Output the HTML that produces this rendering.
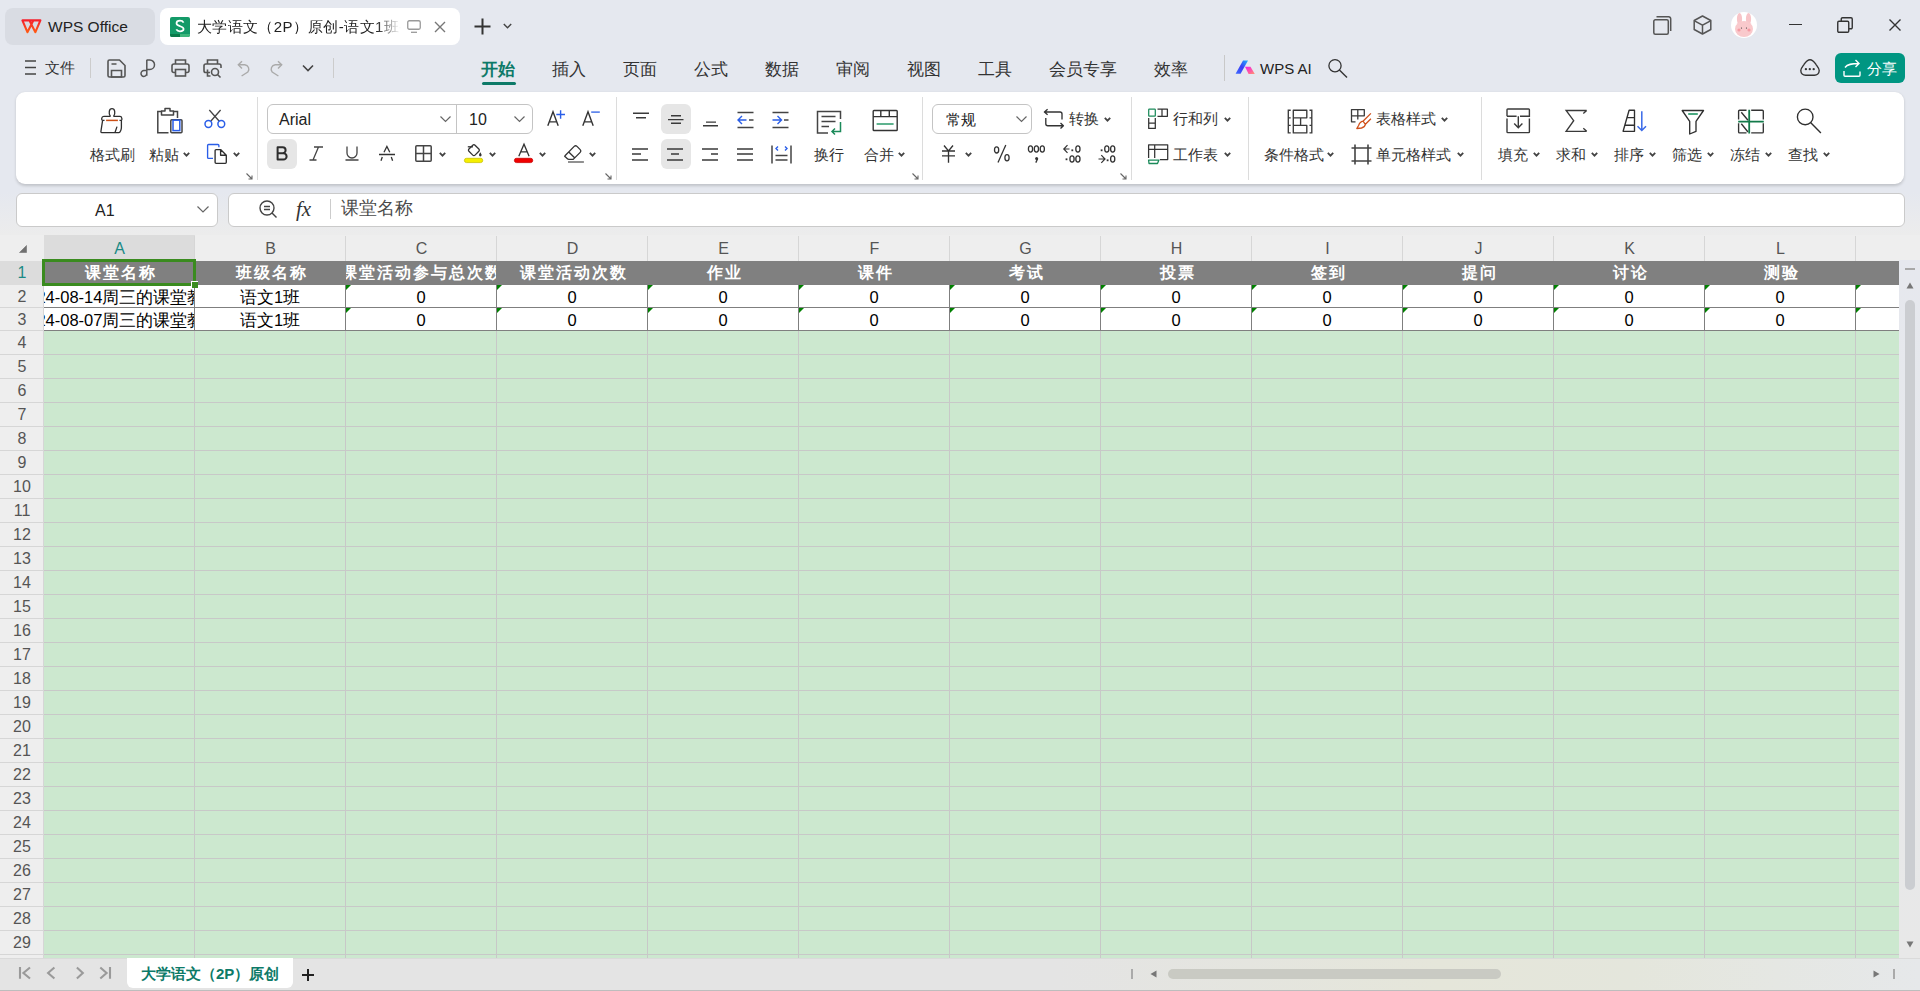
<!DOCTYPE html><html><head><meta charset="utf-8"><style>
*{box-sizing:border-box;margin:0;padding:0}
html,body{width:1920px;height:991px;overflow:hidden}
body{position:relative;font-family:"Liberation Sans",sans-serif;color:#333;background:#e5e8ef}
.a{position:absolute}
svg{position:absolute;overflow:visible}
.t{position:absolute;white-space:nowrap;line-height:1}
.sep{position:absolute;width:1px;background:#dcdcdc;top:97px;height:83px}
.box{position:absolute;border:1px solid #c4c4c4;border-radius:6px;background:#fff}
.bbg{position:absolute;background:#e6e6e6;border-radius:6px}
.lb{position:absolute;white-space:nowrap;line-height:1;font-size:15px;color:#333}
.mn{position:absolute;white-space:nowrap;line-height:1;font-size:17px;color:#333;top:61px}
.ch{position:absolute;width:26px;height:26px;top:236px;text-align:center;font-size:16px;line-height:26px;color:#555}
.rn{position:absolute;left:0;width:44px;text-align:center;font-size:16px;color:#555;line-height:24px}
.hd{position:absolute;top:261px;height:24px;color:#fff;font-weight:bold;font-size:16px;text-align:center;line-height:24px;overflow:hidden;white-space:nowrap;letter-spacing:2px;text-indent:2px}
.dc{position:absolute;height:23px;color:#000;font-size:16.5px;text-align:center;line-height:24.6px;overflow:hidden;white-space:nowrap}
.tri{position:absolute;width:0;height:0;border-top:5px solid #008000;border-right:5px solid transparent}
</style></head><body>
<div class="a" style="left:0;top:0;width:1920px;height:92px;background:#e5e8ef"></div>
<div class="a" style="left:0;top:92px;width:1920px;height:143px;background:linear-gradient(180deg,#e5e8ef 0px,#e5e8ef 100px,#ececec 143px)"></div>
<div class="a" style="left:5px;top:8px;width:150px;height:37px;background:#d9dce3;border-radius:8px"></div>
<svg style="left:21px;top:19px" width="21" height="15" viewBox="0 0 21 15"><defs><linearGradient id="wg" x1="0" y1="0" x2="0" y2="1"><stop offset="0" stop-color="#f5222d"/><stop offset="1" stop-color="#ff5a14"/></linearGradient></defs><path d="M1.4 1.4H19.4L14.4 13.2L10.4 5.6L6.4 13.2Z M8.4 1.4L11.2 7 M12.4 1.4L9.6 7" fill="none" stroke="url(#wg)" stroke-width="2.1" stroke-linejoin="round" stroke-linecap="round"/></svg>
<div class="t" style="left:48px;top:19px;font-size:15.5px;color:#222">WPS Office</div>
<div class="a" style="left:160px;top:8px;width:300px;height:37px;background:#fff;border-radius:8px"></div>
<svg style="left:170px;top:17px" width="20" height="20" viewBox="0 0 20 20"><defs><clipPath id="sc"><rect x="0" y="0" width="20" height="20" rx="2"/></clipPath></defs><g clip-path="url(#sc)"><rect width="20" height="20" fill="#139a68"/><rect y="17" width="10" height="3" fill="#0a7a4a"/><rect x="10" y="17" width="10" height="3" fill="#3db67c"/></g><path d="M13.6 5.6C12.8 4.2 11.5 3.7 10 3.7C7.8 3.7 6.5 4.8 6.5 6.3C6.5 8.2 8.5 8.7 10.2 9.2C12.3 9.8 13.6 10.5 13.6 12C13.6 13.5 12.2 14.3 10 14.3C8.3 14.3 7 13.6 6.3 12.4" fill="none" stroke="#fff" stroke-width="1.7"/></svg>
<div class="t" style="left:197px;top:19px;font-size:15px;color:#222;width:206px;overflow:hidden;letter-spacing:0.35px;-webkit-mask-image:linear-gradient(90deg,#000 180px,transparent 204px)">大学语文（2P）原创-语文1班-课堂</div>
<svg style="left:407px;top:20px" width="14" height="13" viewBox="0 0 14 13"><rect x="0.75" y="0.75" width="12.5" height="8.5" rx="1.5" fill="none" stroke="#999" stroke-width="1.3"/><path d="M4 12.3h6" stroke="#999" stroke-width="1.3"/></svg>
<svg style="left:434px;top:21px" width="12" height="12" viewBox="0 0 12 12"><path d="M1 1L11 11M11 1L1 11" stroke="#777" stroke-width="1.4"/></svg>
<svg style="left:474px;top:18px" width="17" height="17" viewBox="0 0 17 17"><path d="M8.5 0.5v16M0.5 8.5h16" stroke="#333" stroke-width="2"/></svg>
<svg style="left:503px;top:23px" width="9" height="6" viewBox="0 0 9 6"><path d="M0.8 1L4.5 4.8L8.2 1" fill="none" stroke="#444" stroke-width="1.4"/></svg>
<svg style="left:1653px;top:16px" width="19" height="19" viewBox="0 0 19 19"><rect x="0.8" y="3.8" width="14.5" height="14.4" rx="1.5" fill="none" stroke="#555" stroke-width="1.5"/><path d="M3.5 0.8h12.2a2 2 0 0 1 2 2v12.2" fill="none" stroke="#555" stroke-width="1.5"/></svg>
<svg style="left:1693px;top:15px" width="19" height="20" viewBox="0 0 19 20"><path d="M9.5 1L17.8 5.5V14.5L9.5 19L1.2 14.5V5.5Z" fill="none" stroke="#555" stroke-width="1.5" stroke-linejoin="round"/><path d="M1.5 5.8L9.5 10.2L17.5 5.8M9.5 10.2V18.8" fill="none" stroke="#555" stroke-width="1.5"/></svg>
<svg style="left:1731px;top:12px" width="26" height="26" viewBox="0 0 26 26"><circle cx="13" cy="13" r="13" fill="#fff"/><ellipse cx="8.5" cy="7" rx="2.6" ry="6" fill="#f7c4c8"/><ellipse cx="17.5" cy="7" rx="2.6" ry="6" fill="#f7c4c8"/><ellipse cx="13" cy="17" rx="9" ry="8" fill="#f9c9cc"/><circle cx="8" cy="18" r="1.6" fill="#f59aa3"/><circle cx="18" cy="18" r="1.6" fill="#f59aa3"/><circle cx="10.5" cy="16" r="0.6" fill="#333"/><circle cx="15.5" cy="16" r="0.6" fill="#333"/></svg>
<div class="a" style="left:1789px;top:24px;width:12.5px;height:1.2px;background:#333"></div>
<svg style="left:1837px;top:17px" width="16" height="16" viewBox="0 0 16 16"><rect x="0.75" y="4.25" width="11" height="11" rx="1.2" fill="none" stroke="#333" stroke-width="1.4"/><path d="M4.25 4V2a1.25 1.25 0 0 1 1.25-1.25h8.5A1.25 1.25 0 0 1 15.25 2v8.5a1.25 1.25 0 0 1-1.25 1.25H12" fill="none" stroke="#333" stroke-width="1.4"/></svg>
<svg style="left:1889px;top:19px" width="12" height="12" viewBox="0 0 12 12"><path d="M0.5 0.5L11.5 11.5M11.5 0.5L0.5 11.5" stroke="#333" stroke-width="1.4"/></svg>
<svg style="left:25px;top:60px" width="11" height="15" viewBox="0 0 11 15"><path d="M0 1h11M0 7.5h11M0 14h11" stroke="#444" stroke-width="1.5"/></svg>
<div class="t" style="left:45px;top:60px;font-size:15px;color:#333">文件</div>
<div class="a" style="left:90px;top:58px;width:1px;height:20px;background:#ccc"></div>
<svg style="left:107px;top:59px" width="19" height="19" viewBox="0 0 19 19"><path d="M1 2.5a1.5 1.5 0 0 1 1.5-1.5h10L18 6.5v10a1.5 1.5 0 0 1-1.5 1.5h-14A1.5 1.5 0 0 1 1 16.5Z" fill="none" stroke="#555" stroke-width="1.6" stroke-linejoin="round"/><path d="M4.5 11.5h10v6.5h-10Z M4.5 5h5" fill="none" stroke="#555" stroke-width="1.6"/></svg>
<svg style="left:140px;top:59px" width="17" height="19" viewBox="0 0 17 19"><path d="M6.8 1H9.8A4.6 4.6 0 0 1 9.8 10.4H6.8M6.8 0.8V16.8M6.8 11.6H4.2A2.9 2.9 0 1 0 6.8 14.5" fill="none" stroke="#555" stroke-width="1.5"/></svg>
<svg style="left:171px;top:59px" width="19" height="18" viewBox="0 0 19 18"><path d="M4.5 5V1h10v4" fill="none" stroke="#555" stroke-width="1.6"/><rect x="1" y="5" width="17" height="8.5" rx="2" fill="none" stroke="#555" stroke-width="1.6"/><rect x="4.5" y="10.5" width="10" height="6.5" fill="#e5e8ef" stroke="#555" stroke-width="1.6"/></svg>
<svg style="left:203px;top:59px" width="20" height="19" viewBox="0 0 20 19"><path d="M4.5 5V1h10v4" fill="none" stroke="#555" stroke-width="1.6"/><path d="M7 13.5H2.8A1.8 1.8 0 0 1 1 11.7V6.8A1.8 1.8 0 0 1 2.8 5h13.4A1.8 1.8 0 0 1 18 6.8V9" fill="none" stroke="#555" stroke-width="1.6"/><path d="M4.5 10.5v6.5h3" fill="none" stroke="#555" stroke-width="1.6"/><circle cx="12" cy="13" r="3.5" fill="none" stroke="#555" stroke-width="1.6"/><path d="M14.5 15.5L17.5 18.5" stroke="#555" stroke-width="1.6"/></svg>
<svg style="left:237px;top:60px" width="14" height="17" viewBox="0 0 14 17"><path d="M5 1.2L1.3 4.8L5 8.4" fill="none" stroke="#aaa" stroke-width="1.4"/><path d="M1.6 4.8H7.8A4.4 4.4 0 0 1 10.8 12L4.6 16" fill="none" stroke="#aaa" stroke-width="1.4"/></svg>
<svg style="left:269px;top:60px" width="14" height="17" viewBox="0 0 14 17"><path d="M9 1.2L12.7 4.8L9 8.4" fill="none" stroke="#aaa" stroke-width="1.4"/><path d="M12.4 4.8H6.2A4.4 4.4 0 0 0 3.2 12L9.4 16" fill="none" stroke="#aaa" stroke-width="1.4"/></svg>
<svg style="left:302px;top:64px" width="12" height="8" viewBox="0 0 12 8"><path d="M1 1.5L6 6.5L11 1.5" fill="none" stroke="#444" stroke-width="1.6"/></svg>
<div class="a" style="left:333px;top:58px;width:1px;height:20px;background:#ccc"></div>
<div class="mn" style="left:481px;color:#0d7a68;font-weight:bold">开始</div>
<div class="mn" style="left:552px">插入</div>
<div class="mn" style="left:623px">页面</div>
<div class="mn" style="left:694px">公式</div>
<div class="mn" style="left:765px">数据</div>
<div class="mn" style="left:836px">审阅</div>
<div class="mn" style="left:907px">视图</div>
<div class="mn" style="left:978px">工具</div>
<div class="mn" style="left:1049px">会员专享</div>
<div class="mn" style="left:1154px">效率</div>
<div class="a" style="left:482px;top:82px;width:34px;height:3px;background:#0d7a68;border-radius:2px"></div>
<div class="a" style="left:1224px;top:55px;width:1px;height:26px;background:#c8c8c8"></div>
<svg style="left:1235px;top:60px" width="20" height="15" viewBox="0 0 20 15"><defs><linearGradient id="aib" x1="0" y1="1" x2="1" y2="0"><stop offset="0" stop-color="#3f6cff"/><stop offset="0.5" stop-color="#3a3df5"/><stop offset="1" stop-color="#1fb5ff"/></linearGradient><linearGradient id="aip" x1="0" y1="0" x2="1" y2="1"><stop offset="0" stop-color="#f020e8"/><stop offset="0.6" stop-color="#ff5aa0"/><stop offset="1" stop-color="#ff9a70"/></linearGradient></defs><path d="M0.6 13.8L8 0.4H13L5.6 13.8Z" fill="url(#aib)"/><path d="M10 6.8H15.5L19.8 13.9H13.6Z" fill="url(#aip)"/></svg>
<div class="t" style="left:1260px;top:61.3px;font-size:15px;color:#222">WPS AI</div>
<svg style="left:1328px;top:59px" width="20" height="20" viewBox="0 0 20 20"><circle cx="7" cy="6.7" r="6.1" fill="none" stroke="#333" stroke-width="1.3"/><path d="M11.4 11.1L19 18.6" stroke="#333" stroke-width="1.4"/></svg>
<svg style="left:1800px;top:59px" width="21" height="17" viewBox="0 0 21 17"><path d="M10 0.8C7 0.8 5.6 3.2 3.8 5.8C2 8.2 0.8 9.6 0.8 11.6C0.8 14.4 3 16.2 5.6 16.2H14.4C17 16.2 19.2 14.4 19.2 11.6C19.2 9.6 18 8.2 16.2 5.8C14.4 3.2 13 0.8 10 0.8Z" fill="none" stroke="#333" stroke-width="1.4"/><circle cx="5.9" cy="10.2" r="1.15" fill="#333"/><circle cx="9.8" cy="10.2" r="1.15" fill="#333"/><circle cx="13.7" cy="10.2" r="1.15" fill="#333"/></svg>
<div class="a" style="left:1835px;top:53px;width:70px;height:30px;background:#009682;border-radius:6px"></div>
<svg style="left:1843px;top:59px" width="18" height="18" viewBox="0 0 18 18"><path d="M1 12v4.2a1 1 0 0 0 1 1h14a1 1 0 0 0 1-1V12.5" fill="none" stroke="#fff" stroke-width="1.4"/><path d="M2 8.5C4.5 5 8.5 4.5 16 4.5M12.5 1L16 4.5L12.5 8" fill="none" stroke="#fff" stroke-width="1.4"/></svg>
<div class="t" style="left:1867px;top:61px;font-size:15px;color:#fff">分享</div>
<div class="a" style="left:16px;top:92px;width:1888px;height:92px;background:#fff;border-radius:9px;box-shadow:0 1.5px 3px rgba(0,0,0,.16)"></div>
<svg style="left:100px;top:108px" width="24" height="26" viewBox="0 0 24 26"><path d="M10.2 7.8C8.6 5.6 8.8 0.7 12 0.7C15.2 0.7 15.4 5.6 13.8 7.8Q13.5 8.4 14.5 8.4H20C22.2 8.4 22.2 12.3 21.4 12.3V19.5C21.4 21.5 20.2 24.7 19 24.7H1.8C0.8 24.7 0.8 23.8 1 22.8L2.6 12.3C1.3 12.3 1.2 8.4 3.8 8.4H9.4Q10.5 8.4 10.2 7.8ZM2.6 12.3H4.5M19.5 12.3H21.4M17 18.6L15 24.5" fill="none" stroke="#2f2f2f" stroke-width="1.3" stroke-linejoin="round"/><path d="M6.1 12.4H17.9" stroke="#cc4f14" stroke-width="1.5"/></svg>
<div class="lb" style="left:90px;top:146.5px;">格式刷</div>
<svg style="left:157px;top:107px" width="27" height="28" viewBox="0 0 27 28"><path d="M5 4.5H0.8V25.8H11.5" fill="none" stroke="#444" stroke-width="1.5"/><path d="M16.5 4.5H20.5V11" fill="none" stroke="#444" stroke-width="1.5"/><path d="M4.5 8V4H8V1.5H13V4H16.5V8Z" fill="none" stroke="#444" stroke-width="1.5" stroke-linejoin="round"/><rect x="13.8" y="12.8" width="11.2" height="13" rx="1" fill="none" stroke="#444" stroke-width="1.5"/><rect x="16" y="13.2" width="6.8" height="10.4" fill="#fff" stroke="#2a5ee8" stroke-width="1.5"/></svg>
<div class="lb" style="left:149px;top:146.5px;">粘贴</div>
<svg style="left:183px;top:152px" width="7" height="5" viewBox="0 0 7 5"><path d="M0.8 0.8L3.5 3.6L6.2 0.8" fill="none" stroke="#444" stroke-width="1.8"/></svg>
<svg style="left:204px;top:109px" width="22" height="20" viewBox="0 0 22 20"><path d="M5.3 1L15.5 12.5M16.6 1L6.5 12.5" stroke="#444" stroke-width="1.3"/><circle cx="4.4" cy="15" r="3.4" fill="#fff" stroke="#2a5ee8" stroke-width="1.5"/><circle cx="17.3" cy="15" r="3.4" fill="#fff" stroke="#2a5ee8" stroke-width="1.5"/></svg>
<svg style="left:207px;top:144px" width="21" height="21" viewBox="0 0 21 21"><path d="M6 14.4H1.6Q0.6 14.4 0.6 13.4V1.5Q0.6 0.5 1.6 0.5H10.9Q11.9 0.5 11.9 1.5V3.3" fill="none" stroke="#2a5ee8" stroke-width="1.35"/><path d="M9.1 5.6H13.6L19.3 11.25V18.3Q19.3 19.3 18.3 19.3H9.1Q8.1 19.3 8.1 18.3V6.6Q8.1 5.6 9.1 5.6ZM13.6 5.6V11.25H19.3" fill="none" stroke="#2f2f2f" stroke-width="1.35" stroke-linejoin="round"/></svg>
<svg style="left:233px;top:152px" width="7" height="5" viewBox="0 0 7 5"><path d="M0.8 0.8L3.5 3.6L6.2 0.8" fill="none" stroke="#444" stroke-width="1.8"/></svg>
<svg style="left:246px;top:173px" width="7" height="7" viewBox="0 0 7 7"><path d="M0.5 0.5L6 6M6 2.5V6H2.5" fill="none" stroke="#666" stroke-width="1.1"/></svg>
<div class="sep" style="left:257px"></div>
<div class="box" style="left:267px;top:104px;width:266px;height:30px"></div>
<div class="a" style="left:456px;top:105px;width:1px;height:28px;background:#c4c4c4"></div>
<div class="t" style="left:279px;top:112px;font-size:16px;color:#222">Arial</div>
<svg style="left:440px;top:116px" width="11" height="6" viewBox="0 0 11 6"><path d="M0.5 0.5L5.5 5.5L10.5 0.5" fill="none" stroke="#666" stroke-width="1.2"/></svg>
<div class="t" style="left:469px;top:112px;font-size:16px;color:#222">10</div>
<svg style="left:514px;top:116px" width="11" height="6" viewBox="0 0 11 6"><path d="M0.5 0.5L5.5 5.5L10.5 0.5" fill="none" stroke="#666" stroke-width="1.2"/></svg>
<svg style="left:547px;top:110px" width="19" height="17" viewBox="0 0 19 17"><path d="M0.8 15.8L6 1.8L11.2 15.8M2.8 11.9H9.2" fill="none" stroke="#333" stroke-width="1.4"/><path d="M9.3 4.5H18M13.6 0.2V8.7" stroke="#2a5ee8" stroke-width="1.4"/></svg>
<svg style="left:582px;top:110px" width="19" height="17" viewBox="0 0 19 17"><path d="M0.8 15.8L6 1.8L11.2 15.8M2.8 11.9H9.2" fill="none" stroke="#333" stroke-width="1.4"/><path d="M9.2 2.1H17.8" stroke="#3a6ae8" stroke-width="1.4"/></svg>
<div class="bbg" style="left:267px;top:139px;width:30px;height:30px"></div>
<svg style="left:276px;top:146px" width="13" height="15" viewBox="0 0 13 15"><path d="M1.6 1.2H6.6A3 3 0 0 1 6.6 7.2H1.6ZM1.6 7.2H7.4A3.2 3.2 0 0 1 7.4 13.6H1.6Z" fill="none" stroke="#2d2d2d" stroke-width="2" stroke-linejoin="round"/></svg>
<svg style="left:309px;top:146px" width="15" height="15" viewBox="0 0 15 15"><path d="M5 1H14M0.5 14H7.5M9.5 1L4 14" fill="none" stroke="#444" stroke-width="1.3"/></svg>
<svg style="left:345px;top:146px" width="14" height="15" viewBox="0 0 14 15"><path d="M2 0.5V7a5 5 0 0 0 10 0V0.5M0.5 14h13" fill="none" stroke="#444" stroke-width="1.3"/></svg>
<svg style="left:379px;top:146px" width="17" height="15" viewBox="0 0 17 15"><path d="M5 6.2L7.9 0.4L10.8 6.2M0 8.5H16M3.3 11L2 14.8M12.3 11L13.6 14.8" fill="none" stroke="#333" stroke-width="1.3"/></svg>
<svg style="left:415px;top:145px" width="17" height="17" viewBox="0 0 17 17"><rect x="0.8" y="0.8" width="15.4" height="15.4" rx="1" fill="none" stroke="#444" stroke-width="1.5"/><path d="M8.5 1V16M1 8.5H16" stroke="#444" stroke-width="1.5"/></svg>
<svg style="left:439px;top:152px" width="7" height="5" viewBox="0 0 7 5"><path d="M0.8 0.8L3.5 3.6L6.2 0.8" fill="none" stroke="#444" stroke-width="1.8"/></svg>
<svg style="left:464px;top:143px" width="20" height="21" viewBox="0 0 20 21"><path d="M3.8 3.8H9" fill="none" stroke="#333" stroke-width="1.3"/><rect x="-4.3" y="-4.3" width="8.6" height="8.6" rx="1.6" transform="translate(9.9 7.15) rotate(45)" fill="none" stroke="#333" stroke-width="1.3"/><path d="M16.3 9.2C17.2 10.6 17.6 11.4 17.6 12.1A1.3 1.3 0 0 1 15 12.1C15 11.4 15.4 10.6 16.3 9.2Z" fill="#333"/><rect x="0.4" y="15.3" width="18.3" height="4.3" rx="2.1" fill="#f5ef00" stroke="#c9c200" stroke-width="0.8"/></svg>
<svg style="left:489px;top:152px" width="7" height="5" viewBox="0 0 7 5"><path d="M0.8 0.8L3.5 3.6L6.2 0.8" fill="none" stroke="#444" stroke-width="1.8"/></svg>
<svg style="left:514px;top:143px" width="20" height="21" viewBox="0 0 20 21"><path d="M4.8 13.3L10 1.2L15.1 13.3M6.8 8.85h6.4" fill="none" stroke="#333" stroke-width="1.3"/><rect x="0.4" y="15.3" width="18.3" height="4.3" rx="2.1" fill="#f00000" stroke="#c80000" stroke-width="0.8"/></svg>
<svg style="left:539px;top:152px" width="7" height="5" viewBox="0 0 7 5"><path d="M0.8 0.8L3.5 3.6L6.2 0.8" fill="none" stroke="#444" stroke-width="1.8"/></svg>
<svg style="left:563px;top:144px" width="22" height="20" viewBox="0 0 22 20"><path d="M2 11.8L11.2 2.4Q12.6 1 14 2.4L17.2 5.6Q18.6 7 17.2 8.4L10.2 15.4H5.8Q5 15.4 4.4 14.8L2 12.6Q1.4 12.2 2 11.8ZM6 8.2L12.1 14.3" fill="none" stroke="#333" stroke-width="1.3" stroke-linejoin="round"/><path d="M5 18H20.9" stroke="#555" stroke-width="1.3"/></svg>
<svg style="left:589px;top:152px" width="7" height="5" viewBox="0 0 7 5"><path d="M0.8 0.8L3.5 3.6L6.2 0.8" fill="none" stroke="#444" stroke-width="1.8"/></svg>
<svg style="left:605px;top:173px" width="7" height="7" viewBox="0 0 7 7"><path d="M0.5 0.5L6 6M6 2.5V6H2.5" fill="none" stroke="#666" stroke-width="1.1"/></svg>
<div class="sep" style="left:616px"></div>
<div class="bbg" style="left:661px;top:104px;width:30px;height:30px"></div>
<div class="bbg" style="left:661px;top:139px;width:30px;height:30px"></div>
<svg style="left:633px;top:111px" width="20" height="20" viewBox="0 0 20 20"><path d="M0 2.3H16M3 6.8H13" fill="none" stroke="#3a3a3a" stroke-width="1.4"/></svg>
<svg style="left:668px;top:111px" width="20" height="20" viewBox="0 0 20 20"><path d="M3 4.8H13M0 8.6H15.5M3 12.3H13" fill="none" stroke="#3a3a3a" stroke-width="1.4"/></svg>
<svg style="left:703px;top:119px" width="20" height="20" viewBox="0 0 20 20"><path d="M3 3.1H13M0 6.8H15" fill="none" stroke="#3a3a3a" stroke-width="1.4"/></svg>
<svg style="left:737px;top:111px" width="17" height="19" viewBox="0 0 17 19"><path d="M0.5 1.5H16.5M0.5 16.5H16.5M12 9H16.5" fill="none" stroke="#444" stroke-width="1.6"/><path d="M9.5 9H1M5 5L1 9L5 13" fill="none" stroke="#2a5ee8" stroke-width="1.4"/></svg>
<svg style="left:772px;top:111px" width="17" height="19" viewBox="0 0 17 19"><path d="M0.5 1.5H16.5M0.5 16.5H16.5M12 9H16.5" fill="none" stroke="#444" stroke-width="1.6"/><path d="M0.5 9H9M5.5 5L9.5 9L5.5 13" fill="none" stroke="#2a5ee8" stroke-width="1.4"/></svg>
<svg style="left:632px;top:145px" width="20" height="20" viewBox="0 0 20 20"><path d="M0 4H16M0 9H9M0 15H16" fill="none" stroke="#3a3a3a" stroke-width="1.4"/></svg>
<svg style="left:667px;top:145px" width="20" height="20" viewBox="0 0 20 20"><path d="M0 4H16M4 9H12M0 15H16" fill="none" stroke="#3a3a3a" stroke-width="1.4"/></svg>
<svg style="left:702px;top:145px" width="20" height="20" viewBox="0 0 20 20"><path d="M0 4H16M9 9H16M0 15H16" fill="none" stroke="#3a3a3a" stroke-width="1.4"/></svg>
<svg style="left:737px;top:145px" width="20" height="20" viewBox="0 0 20 20"><path d="M0 4H16M0 9H16M0 15H16" fill="none" stroke="#3a3a3a" stroke-width="1.4"/></svg>
<svg style="left:771px;top:145px" width="21" height="19" viewBox="0 0 21 19"><path d="M1 0.5V18.5M20 0.5V18.5M4.5 10.5H16.5M4.5 15H16.5" fill="none" stroke="#444" stroke-width="1.5"/><path d="M7 1.5L5 3.5L7 5.5M14 1.5L16 3.5L14 5.5" fill="none" stroke="#2a5ee8" stroke-width="1.4"/></svg>
<svg style="left:816px;top:110px" width="27" height="25" viewBox="0 0 27 25"><path d="M12 23H1.5V1.5H24.5V9" fill="none" stroke="#444" stroke-width="1.5"/><path d="M5.5 6.5H19.5M5.5 11.5H19.5M5.5 16.5H13" stroke="#444" stroke-width="1.5"/><path d="M24.5 12V21.5H16M19 18.5L16 21.5L19 24.5" fill="none" stroke="#1b8a5a" stroke-width="1.5"/></svg>
<div class="lb" style="left:814px;top:146.5px;">换行</div>
<svg style="left:872px;top:109px" width="26" height="22" viewBox="0 0 26 22"><rect x="1.2" y="1.5" width="24" height="20" rx="0.8" fill="none" stroke="#333" stroke-width="1.4"/><path d="M1 7.6H25M8.8 1.5V7.6M17.3 1.5V7.6" stroke="#333" stroke-width="1.4"/><path d="M4.6 15H21.6" stroke="#2a9a6a" stroke-width="1.5"/></svg>
<div class="lb" style="left:864px;top:146.5px;">合并</div>
<svg style="left:898px;top:152px" width="7" height="5" viewBox="0 0 7 5"><path d="M0.8 0.8L3.5 3.6L6.2 0.8" fill="none" stroke="#444" stroke-width="1.8"/></svg>
<svg style="left:912px;top:173px" width="7" height="7" viewBox="0 0 7 7"><path d="M0.5 0.5L6 6M6 2.5V6H2.5" fill="none" stroke="#666" stroke-width="1.1"/></svg>
<div class="sep" style="left:922px"></div>
<div class="box" style="left:932px;top:104px;width:100px;height:30px"></div>
<div class="t" style="left:946px;top:111.5px;font-size:15px;color:#222">常规</div>
<svg style="left:1016px;top:116px" width="11" height="6" viewBox="0 0 11 6"><path d="M0.5 0.5L5.5 5.5L10.5 0.5" fill="none" stroke="#666" stroke-width="1.2"/></svg>
<svg style="left:1044px;top:108px" width="21" height="22" viewBox="0 0 21 22"><path d="M3.6 1.3L0.4 4L3.6 6.7M0.6 4H16Q18 4 18 6V11.6M1.8 9.9V15.7Q1.8 17.7 3.8 17.7H19.4M16.5 15L19.4 17.7L16.5 20.6" fill="none" stroke="#333" stroke-width="1.35" stroke-linejoin="round"/></svg>
<div class="lb" style="left:1069px;top:111.3px;">转换</div>
<svg style="left:1104px;top:117px" width="7" height="5" viewBox="0 0 7 5"><path d="M0.8 0.8L3.5 3.6L6.2 0.8" fill="none" stroke="#444" stroke-width="1.8"/></svg>
<svg style="left:941px;top:145px" width="15" height="19" viewBox="0 0 15 19"><path d="M3 0.5L7.5 6L12 0.5M1 6h13M1 10.8h13M7.5 6V17.8" fill="none" stroke="#333" stroke-width="1.35"/></svg>
<svg style="left:965px;top:152px" width="7" height="5" viewBox="0 0 7 5"><path d="M0.8 0.8L3.5 3.6L6.2 0.8" fill="none" stroke="#444" stroke-width="1.8"/></svg>
<svg style="left:990px;top:140px" width="24" height="26" viewBox="0 0 24 26"><ellipse cx="6.6" cy="9.9" rx="2.1" ry="3.1" fill="none" stroke="#333" stroke-width="1.3"/><path d="M15.8 5L8 22.5" stroke="#333" stroke-width="1.3"/><ellipse cx="17" cy="17.8" rx="2.1" ry="3.1" fill="none" stroke="#333" stroke-width="1.3"/></svg>
<svg style="left:1025px;top:140px" width="24" height="26" viewBox="0 0 24 26"><ellipse cx="5.5" cy="9" rx="2.1" ry="3.1" fill="none" stroke="#333" stroke-width="1.3"/><ellipse cx="11.4" cy="9" rx="2.1" ry="3.1" fill="none" stroke="#333" stroke-width="1.3"/><ellipse cx="17.3" cy="9" rx="2.1" ry="3.1" fill="none" stroke="#333" stroke-width="1.3"/><circle cx="11.6" cy="18.5" r="1.5" fill="#333"/><path d="M12.6 18.8L10.8 22.6" stroke="#333" stroke-width="1.3"/></svg>
<svg style="left:1060px;top:140px" width="24" height="26" viewBox="0 0 24 26"><path d="M7.5 5.2L3.8 9L7.5 12.8M3.8 9H9.5" fill="none" stroke="#333" stroke-width="1.2"/><rect x="11.4" y="9.4" width="1.8" height="1.8" fill="#333"/><ellipse cx="17.9" cy="9" rx="2.1" ry="3.1" fill="none" stroke="#333" stroke-width="1.3"/><rect x="5.6" y="18.400000000000002" width="1.8" height="1.8" fill="#333"/><ellipse cx="12" cy="19" rx="2.1" ry="3.1" fill="none" stroke="#333" stroke-width="1.3"/><ellipse cx="17.9" cy="19" rx="2.1" ry="3.1" fill="none" stroke="#333" stroke-width="1.3"/></svg>
<svg style="left:1095px;top:140px" width="24" height="26" viewBox="0 0 24 26"><rect x="5.699999999999999" y="9.4" width="1.8" height="1.8" fill="#333"/><ellipse cx="11.8" cy="9" rx="2.1" ry="3.1" fill="none" stroke="#333" stroke-width="1.3"/><ellipse cx="17.7" cy="9" rx="2.1" ry="3.1" fill="none" stroke="#333" stroke-width="1.3"/><path d="M6.3 15.2L10 19L6.3 22.8M3.5 19H10" fill="none" stroke="#333" stroke-width="1.2"/><rect x="11.7" y="19.400000000000002" width="1.8" height="1.8" fill="#333"/><ellipse cx="17.7" cy="19" rx="2.1" ry="3.1" fill="none" stroke="#333" stroke-width="1.3"/></svg>
<svg style="left:1120px;top:173px" width="7" height="7" viewBox="0 0 7 7"><path d="M0.5 0.5L6 6M6 2.5V6H2.5" fill="none" stroke="#666" stroke-width="1.1"/></svg>
<div class="sep" style="left:1131px"></div>
<svg style="left:1148px;top:108px" width="21" height="21" viewBox="0 0 21 21"><rect x="0.7" y="1.2" width="6.6" height="6.8" rx="0.6" fill="none" stroke="#1b8a5a" stroke-width="1.25"/><path d="M9.5 1.2H19.4V8.3H9.5M14 1.2V8.3M0.7 10V20.4H7.3V10M0.7 15H7.3" fill="none" stroke="#333" stroke-width="1.25" stroke-linejoin="round"/></svg>
<div class="lb" style="left:1173px;top:111.3px;">行和列</div>
<svg style="left:1224px;top:117px" width="7" height="5" viewBox="0 0 7 5"><path d="M0.8 0.8L3.5 3.6L6.2 0.8" fill="none" stroke="#444" stroke-width="1.8"/></svg>
<svg style="left:1148px;top:144px" width="21" height="21" viewBox="0 0 21 21"><path d="M0.6 14V0.8H19.7V15.5H11.8M0.6 5.4H19.7M6.7 0.8V14" fill="none" stroke="#333" stroke-width="1.25" stroke-linejoin="round"/><path d="M0.6 16.2H10.8L9.5 19.5H1Z" fill="none" stroke="#1b8a5a" stroke-width="1.3" stroke-linejoin="round"/></svg>
<div class="lb" style="left:1173px;top:146.5px;">工作表</div>
<svg style="left:1224px;top:152px" width="7" height="5" viewBox="0 0 7 5"><path d="M0.8 0.8L3.5 3.6L6.2 0.8" fill="none" stroke="#444" stroke-width="1.8"/></svg>
<div class="sep" style="left:1248px"></div>
<svg style="left:1287px;top:109px" width="27" height="25" viewBox="0 0 27 25"><path d="M3.7 1.25H1.3V23.9H3.7M22.5 1.25H24.8V23.9H22.5M1.3 8.8H3.7M1.3 16.4H3.7M22.5 8.8H24.8M22.5 16.4H24.8" fill="none" stroke="#3a3a3a" stroke-width="1.35"/><path d="M6.3 1.25H19.8V8.8H6.3ZM6.3 16.4H19.8V23.9H6.3ZM6.3 8.8V16.4M13.6 8.8V16.4" fill="none" stroke="#3a3a3a" stroke-width="1.35" stroke-linejoin="round"/></svg>
<div class="lb" style="left:1264px;top:146.5px;">条件格式</div>
<svg style="left:1327px;top:152px" width="7" height="5" viewBox="0 0 7 5"><path d="M0.8 0.8L3.5 3.6L6.2 0.8" fill="none" stroke="#444" stroke-width="1.8"/></svg>
<svg style="left:1351px;top:109px" width="21" height="21" viewBox="0 0 21 21"><path d="M0.5 6.8V0.6H13.3V6.8H0.5V12.8H4.5M6.8 0.6V10.5" fill="none" stroke="#3a3a3a" stroke-width="1.3" stroke-linejoin="round"/><path d="M19.9 4.4L12 12.2M19.9 9.8L14.4 15.3M12 12.2C10 12.5 8.5 14 7.6 16.5L5.8 19.5L10.5 19C12.5 18.5 14 17 14.4 15.3Z" fill="none" stroke="#d0501a" stroke-width="1.3" stroke-linejoin="round"/></svg>
<div class="lb" style="left:1376px;top:111.3px;">表格样式</div>
<svg style="left:1441px;top:117px" width="7" height="5" viewBox="0 0 7 5"><path d="M0.8 0.8L3.5 3.6L6.2 0.8" fill="none" stroke="#444" stroke-width="1.8"/></svg>
<svg style="left:1351px;top:144px" width="21" height="21" viewBox="0 0 21 21"><path d="M4 0.5V20.5M17 0.5V20.5M0.5 4H20.5M0.5 17H20.5" fill="none" stroke="#444" stroke-width="1.6"/></svg>
<div class="lb" style="left:1376px;top:146.5px;">单元格样式</div>
<svg style="left:1457px;top:152px" width="7" height="5" viewBox="0 0 7 5"><path d="M0.8 0.8L3.5 3.6L6.2 0.8" fill="none" stroke="#444" stroke-width="1.8"/></svg>
<div class="sep" style="left:1481px"></div>
<svg style="left:1506px;top:108px" width="26" height="26" viewBox="0 0 26 26"><path d="M1 8.3V1.8Q1 1 1.8 1H22.6Q23.4 1 23.4 1.8V8.3H14M10.6 8.3H1M1 10.5V23.8Q1 24.6 1.8 24.6H22.6Q23.4 24.6 23.4 23.8V10.5M12.3 8.3V19.8M8.2 15.5L12.3 19.8L16.4 15.5" fill="none" stroke="#3a3a3a" stroke-width="1.4"/></svg>
<svg style="left:1565px;top:108px" width="26" height="26" viewBox="0 0 26 26"><path d="M21.7 2.5H1.1L8.7 12.7L1.1 23.3H21.7M21.7 2.5L18.3 5.4M21.7 23.3L18.3 20.3" fill="none" stroke="#3a3a3a" stroke-width="1.35" stroke-linejoin="miter"/></svg>
<svg style="left:1622px;top:108px" width="26" height="26" viewBox="0 0 26 26"><path d="M7.1 2.25H12.5V23.3H1.1ZM5 9.6H12.5M2.8 17.25H12.5" fill="none" stroke="#2f2f2f" stroke-width="1.35" stroke-linejoin="round"/><path d="M19.8 3.3V22.3M15.5 18.2L19.8 22.5L24 18.2" fill="none" stroke="#3a6ae8" stroke-width="1.5"/></svg>
<svg style="left:1681px;top:108px" width="26" height="26" viewBox="0 0 26 26"><path d="M1.2 2.5H22.5L15 13.4V23.3L8.7 26V13.4Z" fill="none" stroke="#2f2f2f" stroke-width="1.35" stroke-linejoin="round"/><path d="M7.2 6H16.8" stroke="#2a9a6a" stroke-width="1.7"/></svg>
<svg style="left:1738px;top:108px" width="26" height="26" viewBox="0 0 26 26"><path d="M8.5 2.25H1.6Q0.6 2.25 0.6 3.25V11.5M0.6 15.2V23.9Q0.6 24.9 1.6 24.9H8.5M13.2 2.25H24.3Q25.3 2.25 25.3 3.25V11.5M25.3 15.2V23.9Q25.3 24.9 24.3 24.9H13.2M3.3 4.2L10 12.3M3.3 15.8L10 24" fill="none" stroke="#333" stroke-width="1.35"/><path d="M11.2 1.8V25.5M0.2 13.6H25.8" stroke="#127a4a" stroke-width="1.8"/></svg>
<svg style="left:1796px;top:108px" width="26" height="26" viewBox="0 0 26 26"><circle cx="9.2" cy="8.9" r="7.8" fill="none" stroke="#2f2f2f" stroke-width="1.35"/><path d="M14.8 14.8L24.9 24.9" stroke="#2f2f2f" stroke-width="1.4"/></svg>
<div class="lb" style="left:1498px;top:146.5px;">填充</div>
<svg style="left:1533px;top:152px" width="7" height="5" viewBox="0 0 7 5"><path d="M0.8 0.8L3.5 3.6L6.2 0.8" fill="none" stroke="#444" stroke-width="1.8"/></svg>
<div class="lb" style="left:1556px;top:146.5px;">求和</div>
<svg style="left:1591px;top:152px" width="7" height="5" viewBox="0 0 7 5"><path d="M0.8 0.8L3.5 3.6L6.2 0.8" fill="none" stroke="#444" stroke-width="1.8"/></svg>
<div class="lb" style="left:1614px;top:146.5px;">排序</div>
<svg style="left:1649px;top:152px" width="7" height="5" viewBox="0 0 7 5"><path d="M0.8 0.8L3.5 3.6L6.2 0.8" fill="none" stroke="#444" stroke-width="1.8"/></svg>
<div class="lb" style="left:1672px;top:146.5px;">筛选</div>
<svg style="left:1707px;top:152px" width="7" height="5" viewBox="0 0 7 5"><path d="M0.8 0.8L3.5 3.6L6.2 0.8" fill="none" stroke="#444" stroke-width="1.8"/></svg>
<div class="lb" style="left:1730px;top:146.5px;">冻结</div>
<svg style="left:1765px;top:152px" width="7" height="5" viewBox="0 0 7 5"><path d="M0.8 0.8L3.5 3.6L6.2 0.8" fill="none" stroke="#444" stroke-width="1.8"/></svg>
<div class="lb" style="left:1788px;top:146.5px;">查找</div>
<svg style="left:1823px;top:152px" width="7" height="5" viewBox="0 0 7 5"><path d="M0.8 0.8L3.5 3.6L6.2 0.8" fill="none" stroke="#444" stroke-width="1.8"/></svg>
<div class="box" style="left:16px;top:192.5px;width:202px;height:34.5px;border-color:#cacaca"></div>
<div class="t" style="left:95px;top:203px;font-size:16px;color:#222">A1</div>
<svg style="left:197px;top:206px" width="12" height="7" viewBox="0 0 12 7"><path d="M0.5 0.5L6 6L11.5 0.5" fill="none" stroke="#666" stroke-width="1.2"/></svg>
<div class="box" style="left:228px;top:192.5px;width:1677px;height:34.5px;border-color:#cacaca"></div>
<svg style="left:259px;top:200px" width="19" height="19" viewBox="0 0 19 19"><circle cx="8" cy="8" r="7" fill="none" stroke="#444" stroke-width="1.4"/><path d="M5 6.5h6M5 9.5h6" stroke="#444" stroke-width="1.3"/><path d="M13 13L17.5 17.5" stroke="#444" stroke-width="1.4"/></svg>
<div class="t" style="left:296px;top:199px;font-size:21px;color:#333;font-family:'Liberation Serif',serif;font-style:italic">fx</div>
<div class="a" style="left:330px;top:199px;width:1px;height:20px;background:#ccc"></div>
<div class="t" style="left:341px;top:200px;font-size:17.5px;color:#4a4a4a">课堂名称</div>
<div class="a" style="left:0;top:235px;width:1920px;height:26px;background:#eeeeee"></div>
<div class="a" style="left:44px;top:235px;width:151px;height:26px;background:#dcdcdc"></div>
<div class="a" style="left:0;top:261px;width:44px;height:697px;background:#eeeeee"></div>
<div class="a" style="left:0;top:261px;width:44px;height:24px;background:#dcdcdc"></div>
<svg style="left:19px;top:245px" width="8" height="8" viewBox="0 0 8 8"><path d="M7.5 0.5V7.5H0.5Z" fill="#707070" stroke="#707070" stroke-width="0.6" stroke-linejoin="round"/></svg>
<div class="ch" style="left:44px;width:151px;color:#1a8a86">A</div>
<div class="ch" style="left:195px;width:151px;color:#555">B</div>
<div class="a" style="left:194px;top:236px;width:1px;height:25px;background:#d6d6d6"></div>
<div class="ch" style="left:346px;width:151px;color:#555">C</div>
<div class="a" style="left:345px;top:236px;width:1px;height:25px;background:#d6d6d6"></div>
<div class="ch" style="left:497px;width:151px;color:#555">D</div>
<div class="a" style="left:496px;top:236px;width:1px;height:25px;background:#d6d6d6"></div>
<div class="ch" style="left:648px;width:151px;color:#555">E</div>
<div class="a" style="left:647px;top:236px;width:1px;height:25px;background:#d6d6d6"></div>
<div class="ch" style="left:799px;width:151px;color:#555">F</div>
<div class="a" style="left:798px;top:236px;width:1px;height:25px;background:#d6d6d6"></div>
<div class="ch" style="left:950px;width:151px;color:#555">G</div>
<div class="a" style="left:949px;top:236px;width:1px;height:25px;background:#d6d6d6"></div>
<div class="ch" style="left:1101px;width:151px;color:#555">H</div>
<div class="a" style="left:1100px;top:236px;width:1px;height:25px;background:#d6d6d6"></div>
<div class="ch" style="left:1252px;width:151px;color:#555">I</div>
<div class="a" style="left:1251px;top:236px;width:1px;height:25px;background:#d6d6d6"></div>
<div class="ch" style="left:1403px;width:151px;color:#555">J</div>
<div class="a" style="left:1402px;top:236px;width:1px;height:25px;background:#d6d6d6"></div>
<div class="ch" style="left:1554px;width:151px;color:#555">K</div>
<div class="a" style="left:1553px;top:236px;width:1px;height:25px;background:#d6d6d6"></div>
<div class="ch" style="left:1705px;width:151px;color:#555">L</div>
<div class="a" style="left:1704px;top:236px;width:1px;height:25px;background:#d6d6d6"></div>
<div class="a" style="left:1855px;top:236px;width:1px;height:25px;background:#d6d6d6"></div>
<div class="a" style="left:44px;top:261px;width:1855px;height:697px;background:#cce8cf"></div>
<div class="a" style="left:44px;top:354px;width:1855px;height:1px;background:#c8c8c8"></div>
<div class="a" style="left:44px;top:378px;width:1855px;height:1px;background:#c8c8c8"></div>
<div class="a" style="left:44px;top:402px;width:1855px;height:1px;background:#c8c8c8"></div>
<div class="a" style="left:44px;top:426px;width:1855px;height:1px;background:#c8c8c8"></div>
<div class="a" style="left:44px;top:450px;width:1855px;height:1px;background:#c8c8c8"></div>
<div class="a" style="left:44px;top:474px;width:1855px;height:1px;background:#c8c8c8"></div>
<div class="a" style="left:44px;top:498px;width:1855px;height:1px;background:#c8c8c8"></div>
<div class="a" style="left:44px;top:522px;width:1855px;height:1px;background:#c8c8c8"></div>
<div class="a" style="left:44px;top:546px;width:1855px;height:1px;background:#c8c8c8"></div>
<div class="a" style="left:44px;top:570px;width:1855px;height:1px;background:#c8c8c8"></div>
<div class="a" style="left:44px;top:594px;width:1855px;height:1px;background:#c8c8c8"></div>
<div class="a" style="left:44px;top:618px;width:1855px;height:1px;background:#c8c8c8"></div>
<div class="a" style="left:44px;top:642px;width:1855px;height:1px;background:#c8c8c8"></div>
<div class="a" style="left:44px;top:666px;width:1855px;height:1px;background:#c8c8c8"></div>
<div class="a" style="left:44px;top:690px;width:1855px;height:1px;background:#c8c8c8"></div>
<div class="a" style="left:44px;top:714px;width:1855px;height:1px;background:#c8c8c8"></div>
<div class="a" style="left:44px;top:738px;width:1855px;height:1px;background:#c8c8c8"></div>
<div class="a" style="left:44px;top:762px;width:1855px;height:1px;background:#c8c8c8"></div>
<div class="a" style="left:44px;top:786px;width:1855px;height:1px;background:#c8c8c8"></div>
<div class="a" style="left:44px;top:810px;width:1855px;height:1px;background:#c8c8c8"></div>
<div class="a" style="left:44px;top:834px;width:1855px;height:1px;background:#c8c8c8"></div>
<div class="a" style="left:44px;top:858px;width:1855px;height:1px;background:#c8c8c8"></div>
<div class="a" style="left:44px;top:882px;width:1855px;height:1px;background:#c8c8c8"></div>
<div class="a" style="left:44px;top:906px;width:1855px;height:1px;background:#c8c8c8"></div>
<div class="a" style="left:44px;top:930px;width:1855px;height:1px;background:#c8c8c8"></div>
<div class="a" style="left:44px;top:954px;width:1855px;height:1px;background:#c8c8c8"></div>
<div class="a" style="left:194px;top:331px;width:1px;height:627px;background:#c8c8c8"></div>
<div class="a" style="left:345px;top:331px;width:1px;height:627px;background:#c8c8c8"></div>
<div class="a" style="left:496px;top:331px;width:1px;height:627px;background:#c8c8c8"></div>
<div class="a" style="left:647px;top:331px;width:1px;height:627px;background:#c8c8c8"></div>
<div class="a" style="left:798px;top:331px;width:1px;height:627px;background:#c8c8c8"></div>
<div class="a" style="left:949px;top:331px;width:1px;height:627px;background:#c8c8c8"></div>
<div class="a" style="left:1100px;top:331px;width:1px;height:627px;background:#c8c8c8"></div>
<div class="a" style="left:1251px;top:331px;width:1px;height:627px;background:#c8c8c8"></div>
<div class="a" style="left:1402px;top:331px;width:1px;height:627px;background:#c8c8c8"></div>
<div class="a" style="left:1553px;top:331px;width:1px;height:627px;background:#c8c8c8"></div>
<div class="a" style="left:1704px;top:331px;width:1px;height:627px;background:#c8c8c8"></div>
<div class="a" style="left:1855px;top:331px;width:1px;height:627px;background:#c8c8c8"></div>
<div class="rn" style="top:261px;height:24px;line-height:24px;color:#1a8a86">1</div>
<div class="rn" style="top:285px;height:23px;line-height:23px;color:#555">2</div>
<div class="a" style="left:0;top:307px;width:43px;height:1px;background:#d6d6d6"></div>
<div class="rn" style="top:308px;height:23px;line-height:23px;color:#555">3</div>
<div class="a" style="left:0;top:330px;width:43px;height:1px;background:#d6d6d6"></div>
<div class="rn" style="top:331px;height:24px;line-height:24px;color:#555">4</div>
<div class="a" style="left:0;top:354px;width:43px;height:1px;background:#d6d6d6"></div>
<div class="rn" style="top:355px;height:24px;line-height:24px;color:#555">5</div>
<div class="a" style="left:0;top:378px;width:43px;height:1px;background:#d6d6d6"></div>
<div class="rn" style="top:379px;height:24px;line-height:24px;color:#555">6</div>
<div class="a" style="left:0;top:402px;width:43px;height:1px;background:#d6d6d6"></div>
<div class="rn" style="top:403px;height:24px;line-height:24px;color:#555">7</div>
<div class="a" style="left:0;top:426px;width:43px;height:1px;background:#d6d6d6"></div>
<div class="rn" style="top:427px;height:24px;line-height:24px;color:#555">8</div>
<div class="a" style="left:0;top:450px;width:43px;height:1px;background:#d6d6d6"></div>
<div class="rn" style="top:451px;height:24px;line-height:24px;color:#555">9</div>
<div class="a" style="left:0;top:474px;width:43px;height:1px;background:#d6d6d6"></div>
<div class="rn" style="top:475px;height:24px;line-height:24px;color:#555">10</div>
<div class="a" style="left:0;top:498px;width:43px;height:1px;background:#d6d6d6"></div>
<div class="rn" style="top:499px;height:24px;line-height:24px;color:#555">11</div>
<div class="a" style="left:0;top:522px;width:43px;height:1px;background:#d6d6d6"></div>
<div class="rn" style="top:523px;height:24px;line-height:24px;color:#555">12</div>
<div class="a" style="left:0;top:546px;width:43px;height:1px;background:#d6d6d6"></div>
<div class="rn" style="top:547px;height:24px;line-height:24px;color:#555">13</div>
<div class="a" style="left:0;top:570px;width:43px;height:1px;background:#d6d6d6"></div>
<div class="rn" style="top:571px;height:24px;line-height:24px;color:#555">14</div>
<div class="a" style="left:0;top:594px;width:43px;height:1px;background:#d6d6d6"></div>
<div class="rn" style="top:595px;height:24px;line-height:24px;color:#555">15</div>
<div class="a" style="left:0;top:618px;width:43px;height:1px;background:#d6d6d6"></div>
<div class="rn" style="top:619px;height:24px;line-height:24px;color:#555">16</div>
<div class="a" style="left:0;top:642px;width:43px;height:1px;background:#d6d6d6"></div>
<div class="rn" style="top:643px;height:24px;line-height:24px;color:#555">17</div>
<div class="a" style="left:0;top:666px;width:43px;height:1px;background:#d6d6d6"></div>
<div class="rn" style="top:667px;height:24px;line-height:24px;color:#555">18</div>
<div class="a" style="left:0;top:690px;width:43px;height:1px;background:#d6d6d6"></div>
<div class="rn" style="top:691px;height:24px;line-height:24px;color:#555">19</div>
<div class="a" style="left:0;top:714px;width:43px;height:1px;background:#d6d6d6"></div>
<div class="rn" style="top:715px;height:24px;line-height:24px;color:#555">20</div>
<div class="a" style="left:0;top:738px;width:43px;height:1px;background:#d6d6d6"></div>
<div class="rn" style="top:739px;height:24px;line-height:24px;color:#555">21</div>
<div class="a" style="left:0;top:762px;width:43px;height:1px;background:#d6d6d6"></div>
<div class="rn" style="top:763px;height:24px;line-height:24px;color:#555">22</div>
<div class="a" style="left:0;top:786px;width:43px;height:1px;background:#d6d6d6"></div>
<div class="rn" style="top:787px;height:24px;line-height:24px;color:#555">23</div>
<div class="a" style="left:0;top:810px;width:43px;height:1px;background:#d6d6d6"></div>
<div class="rn" style="top:811px;height:24px;line-height:24px;color:#555">24</div>
<div class="a" style="left:0;top:834px;width:43px;height:1px;background:#d6d6d6"></div>
<div class="rn" style="top:835px;height:24px;line-height:24px;color:#555">25</div>
<div class="a" style="left:0;top:858px;width:43px;height:1px;background:#d6d6d6"></div>
<div class="rn" style="top:859px;height:24px;line-height:24px;color:#555">26</div>
<div class="a" style="left:0;top:882px;width:43px;height:1px;background:#d6d6d6"></div>
<div class="rn" style="top:883px;height:24px;line-height:24px;color:#555">27</div>
<div class="a" style="left:0;top:906px;width:43px;height:1px;background:#d6d6d6"></div>
<div class="rn" style="top:907px;height:24px;line-height:24px;color:#555">28</div>
<div class="a" style="left:0;top:930px;width:43px;height:1px;background:#d6d6d6"></div>
<div class="rn" style="top:931px;height:24px;line-height:24px;color:#555">29</div>
<div class="a" style="left:0;top:954px;width:43px;height:1px;background:#d6d6d6"></div>
<div class="a" style="left:0;top:954px;width:43px;height:1px;background:#d6d6d6"></div>
<div class="a" style="left:43px;top:261px;width:1px;height:697px;background:#d6d6d6"></div>
<div class="a" style="left:44px;top:261px;width:1855px;height:24px;background:#808080"></div>
<div class="hd" style="left:44px;width:151px">课堂名称</div>
<div class="hd" style="left:195px;width:151px">班级名称</div>
<div class="hd" style="left:346px;width:150px;text-align:left;text-indent:0"><span style="position:absolute;left:-5.5px;top:0">课堂活动参与总次数</span></div>
<div class="hd" style="left:497px;width:151px">课堂活动次数</div>
<div class="hd" style="left:648px;width:151px">作业</div>
<div class="hd" style="left:799px;width:151px">课件</div>
<div class="hd" style="left:950px;width:151px">考试</div>
<div class="hd" style="left:1101px;width:151px">投票</div>
<div class="hd" style="left:1252px;width:151px">签到</div>
<div class="hd" style="left:1403px;width:151px">提问</div>
<div class="hd" style="left:1554px;width:151px">讨论</div>
<div class="hd" style="left:1705px;width:151px">测验</div>
<div class="a" style="left:44px;top:285px;width:1855px;height:23px;background:#fff"></div>
<div class="a" style="left:44px;top:307px;width:1855px;height:1px;background:#7f7f7f"></div>
<div class="a" style="left:194px;top:285px;width:1px;height:23px;background:#7f7f7f"></div>
<div class="a" style="left:345px;top:285px;width:1px;height:23px;background:#7f7f7f"></div>
<div class="a" style="left:496px;top:285px;width:1px;height:23px;background:#7f7f7f"></div>
<div class="a" style="left:647px;top:285px;width:1px;height:23px;background:#7f7f7f"></div>
<div class="a" style="left:798px;top:285px;width:1px;height:23px;background:#7f7f7f"></div>
<div class="a" style="left:949px;top:285px;width:1px;height:23px;background:#7f7f7f"></div>
<div class="a" style="left:1100px;top:285px;width:1px;height:23px;background:#7f7f7f"></div>
<div class="a" style="left:1251px;top:285px;width:1px;height:23px;background:#7f7f7f"></div>
<div class="a" style="left:1402px;top:285px;width:1px;height:23px;background:#7f7f7f"></div>
<div class="a" style="left:1553px;top:285px;width:1px;height:23px;background:#7f7f7f"></div>
<div class="a" style="left:1704px;top:285px;width:1px;height:23px;background:#7f7f7f"></div>
<div class="a" style="left:1855px;top:285px;width:1px;height:23px;background:#7f7f7f"></div>
<div class="dc" style="left:44px;top:285px;width:150px;overflow:hidden"><span style="position:absolute;left:-7.6px;top:0">24-08-14<span style="font-size:17px">周三的课堂教学</span></span></div>
<div class="dc" style="left:195px;top:285px;width:150px">语文1班</div>
<div class="dc" style="left:346px;top:285px;width:150px">0</div>
<div class="dc" style="left:497px;top:285px;width:150px">0</div>
<div class="dc" style="left:648px;top:285px;width:150px">0</div>
<div class="dc" style="left:799px;top:285px;width:150px">0</div>
<div class="dc" style="left:950px;top:285px;width:150px">0</div>
<div class="dc" style="left:1101px;top:285px;width:150px">0</div>
<div class="dc" style="left:1252px;top:285px;width:150px">0</div>
<div class="dc" style="left:1403px;top:285px;width:150px">0</div>
<div class="dc" style="left:1554px;top:285px;width:150px">0</div>
<div class="dc" style="left:1705px;top:285px;width:150px">0</div>
<div class="tri" style="left:346px;top:285px"></div>
<div class="tri" style="left:497px;top:285px"></div>
<div class="tri" style="left:648px;top:285px"></div>
<div class="tri" style="left:799px;top:285px"></div>
<div class="tri" style="left:950px;top:285px"></div>
<div class="tri" style="left:1101px;top:285px"></div>
<div class="tri" style="left:1252px;top:285px"></div>
<div class="tri" style="left:1403px;top:285px"></div>
<div class="tri" style="left:1554px;top:285px"></div>
<div class="tri" style="left:1705px;top:285px"></div>
<div class="tri" style="left:1856px;top:285px"></div>
<div class="a" style="left:44px;top:308px;width:1855px;height:23px;background:#fff"></div>
<div class="a" style="left:44px;top:330px;width:1855px;height:1px;background:#7f7f7f"></div>
<div class="a" style="left:194px;top:308px;width:1px;height:23px;background:#7f7f7f"></div>
<div class="a" style="left:345px;top:308px;width:1px;height:23px;background:#7f7f7f"></div>
<div class="a" style="left:496px;top:308px;width:1px;height:23px;background:#7f7f7f"></div>
<div class="a" style="left:647px;top:308px;width:1px;height:23px;background:#7f7f7f"></div>
<div class="a" style="left:798px;top:308px;width:1px;height:23px;background:#7f7f7f"></div>
<div class="a" style="left:949px;top:308px;width:1px;height:23px;background:#7f7f7f"></div>
<div class="a" style="left:1100px;top:308px;width:1px;height:23px;background:#7f7f7f"></div>
<div class="a" style="left:1251px;top:308px;width:1px;height:23px;background:#7f7f7f"></div>
<div class="a" style="left:1402px;top:308px;width:1px;height:23px;background:#7f7f7f"></div>
<div class="a" style="left:1553px;top:308px;width:1px;height:23px;background:#7f7f7f"></div>
<div class="a" style="left:1704px;top:308px;width:1px;height:23px;background:#7f7f7f"></div>
<div class="a" style="left:1855px;top:308px;width:1px;height:23px;background:#7f7f7f"></div>
<div class="dc" style="left:44px;top:308px;width:150px;overflow:hidden"><span style="position:absolute;left:-7.6px;top:0">24-08-07<span style="font-size:17px">周三的课堂教学</span></span></div>
<div class="dc" style="left:195px;top:308px;width:150px">语文1班</div>
<div class="dc" style="left:346px;top:308px;width:150px">0</div>
<div class="dc" style="left:497px;top:308px;width:150px">0</div>
<div class="dc" style="left:648px;top:308px;width:150px">0</div>
<div class="dc" style="left:799px;top:308px;width:150px">0</div>
<div class="dc" style="left:950px;top:308px;width:150px">0</div>
<div class="dc" style="left:1101px;top:308px;width:150px">0</div>
<div class="dc" style="left:1252px;top:308px;width:150px">0</div>
<div class="dc" style="left:1403px;top:308px;width:150px">0</div>
<div class="dc" style="left:1554px;top:308px;width:150px">0</div>
<div class="dc" style="left:1705px;top:308px;width:150px">0</div>
<div class="tri" style="left:346px;top:308px"></div>
<div class="tri" style="left:497px;top:308px"></div>
<div class="tri" style="left:648px;top:308px"></div>
<div class="tri" style="left:799px;top:308px"></div>
<div class="tri" style="left:950px;top:308px"></div>
<div class="tri" style="left:1101px;top:308px"></div>
<div class="tri" style="left:1252px;top:308px"></div>
<div class="tri" style="left:1403px;top:308px"></div>
<div class="tri" style="left:1554px;top:308px"></div>
<div class="tri" style="left:1705px;top:308px"></div>
<div class="tri" style="left:1856px;top:308px"></div>
<div class="a" style="left:42px;top:259px;width:154px;height:27px;border:3px solid #3a8b1f"></div>
<div class="a" style="left:191px;top:281px;width:7px;height:7px;background:#3a8b1f;border-left:1px solid #fff;border-top:1px solid #fff"></div>
<div class="a" style="left:1899px;top:260px;width:21px;height:698px;background:linear-gradient(180deg,#e6e8ee,#e8e8e8)"></div>
<div class="a" style="left:1905px;top:268px;width:10px;height:2px;background:#a8a8a8"></div>
<svg style="left:1906px;top:282px" width="8" height="7" viewBox="0 0 8 7"><path d="M4 0.5L7.5 6.5H0.5Z" fill="#777"/></svg>
<div class="a" style="left:1905px;top:300px;width:10px;height:590px;background:#cbcdd1;border-radius:5px"></div>
<svg style="left:1906px;top:941px" width="8" height="7" viewBox="0 0 8 7"><path d="M0.5 0.5H7.5L4 6.5Z" fill="#777"/></svg>
<div class="a" style="left:0;top:958px;width:1920px;height:33px;background:linear-gradient(90deg,#e4e4e4 0%,#e4e4e4 55%,#e5e6da 75%,#e4e6dc 85%,#e6e8ea 100%)"></div>
<div class="a" style="left:0;top:990px;width:1920px;height:1px;background:#bdbdbd"></div>
<div class="a" style="left:0;top:958px;width:1920px;height:1px;background:#dadada"></div>
<svg style="left:18px;top:967px" width="14" height="13" viewBox="0 0 14 13"><path d="M2 0V11.8M12 0.5L5.4 6L12 11.5" fill="none" stroke="#9a9a9a" stroke-width="2.1"/></svg>
<svg style="left:47px;top:967px" width="9" height="13" viewBox="0 0 9 13"><path d="M7.4 0.5L1.1 6L7.4 11.5" fill="none" stroke="#9a9a9a" stroke-width="2.1"/></svg>
<svg style="left:75px;top:967px" width="9" height="13" viewBox="0 0 9 13"><path d="M1.9 0.5L7.8 6L1.9 11.5" fill="none" stroke="#9a9a9a" stroke-width="2.1"/></svg>
<svg style="left:99px;top:967px" width="13" height="13" viewBox="0 0 13 13"><path d="M11 0V11.8M1.3 0.5L7.6 6L1.3 11.5" fill="none" stroke="#9a9a9a" stroke-width="2.1"/></svg>
<div class="a" style="left:127px;top:958px;width:166px;height:30px;background:#fff;border-radius:0 0 6px 6px"></div>
<div class="t" style="left:141px;top:966px;font-size:15px;font-weight:bold;color:#0d7a68">大学语文（2P）原创</div>
<svg style="left:302px;top:969px" width="12" height="12" viewBox="0 0 12 12"><path d="M6 0V12M0 6H12" stroke="#222" stroke-width="2"/></svg>
<div class="a" style="left:1131px;top:969px;width:2px;height:10px;background:#aaa"></div>
<svg style="left:1150px;top:970px" width="7" height="8" viewBox="0 0 7 8"><path d="M6.5 0.5V7.5L0.5 4Z" fill="#777"/></svg>
<div class="a" style="left:1168px;top:969px;width:333px;height:10px;background:#c9cac3;border-radius:5px"></div>
<svg style="left:1873px;top:970px" width="7" height="8" viewBox="0 0 7 8"><path d="M0.5 0.5V7.5L6.5 4Z" fill="#777"/></svg>
<div class="a" style="left:1893px;top:969px;width:2px;height:10px;background:#aaa"></div>
</body></html>
